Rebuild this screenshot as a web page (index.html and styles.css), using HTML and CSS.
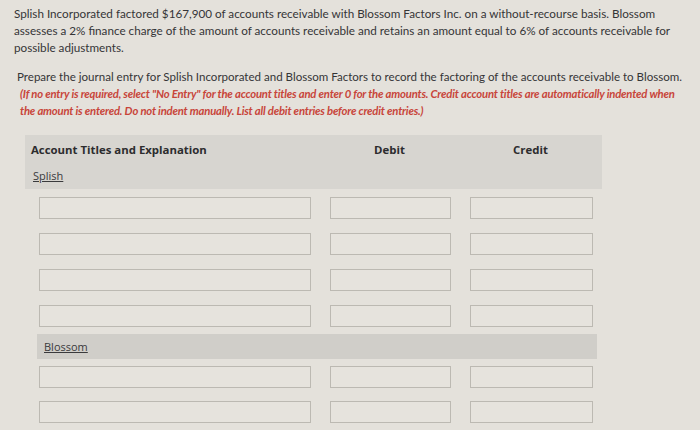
FILE: index.html
```html
<!DOCTYPE html>
<html>
<head>
<meta charset="utf-8">
<link rel="stylesheet" href="styles.css">
</head>
<body>
<div class="page">
  <p class="intro">Splish Incorporated factored $167,900 of accounts receivable with Blossom Factors Inc. on a without-recourse basis. Blossom assesses a 2% finance charge of the amount of accounts receivable and retains an amount equal to 6% of accounts receivable for possible adjustments.</p>
  <p class="task">Prepare the journal entry for Splish Incorporated and Blossom Factors to record the factoring of the accounts receivable to Blossom.
    <span class="note">(If no entry is required, select "No Entry" for the account titles and enter 0 for the amounts. Credit account titles are automatically indented when the amount is entered. Do not indent manually. List all debit entries before credit entries.)</span></p>

  <div class="sheet">
    <div class="head">
      <div class="cols">
        <div class="h-acct">Account Titles and Explanation</div>
        <div class="h-num">Debit</div>
        <div class="h-num">Credit</div>
      </div>
      <div class="party">Splish</div>
    </div>
    <div class="rows">
      <div class="cols row"><div class="box"></div><div class="box"></div><div class="box"></div></div>
      <div class="cols row"><div class="box"></div><div class="box"></div><div class="box"></div></div>
      <div class="cols row"><div class="box"></div><div class="box"></div><div class="box"></div></div>
      <div class="cols row"><div class="box"></div><div class="box"></div><div class="box"></div></div>
    </div>
    <div class="band"><span class="party">Blossom</span></div>
    <div class="rows rows-b">
      <div class="cols row"><div class="box"></div><div class="box"></div><div class="box"></div></div>
      <div class="cols row"><div class="box"></div><div class="box"></div><div class="box"></div></div>
    </div>
  </div>
</div>
</body>
</html>
```

FILE: styles.css
```css
html, body {
  margin: 0;
  padding: 0;
  background: #e4e1db;
  height: 100%;
  overflow: hidden;
}
.page {
  padding: 5px 0 0 14px;
  font-family: Lato, "Open Sans", sans-serif;
  color: #353537;
}
.intro, .task {
  margin: 0;
  font-size: 11.7px;
  line-height: 17px;
  width: 662px;
}
.task {
  margin-top: 12px;
  padding-left: 3px;
  font-size: 11.55px;
  width: 680px;
}
.note {
  display: block;
  color: #c8453a;
  font-weight: bold;
  font-style: italic;
  font-size: 11.3px;
  letter-spacing: -0.2px;
  padding-left: 3px;
  width: 656px;
}
.sheet {
  margin: 16px 0 0 11px;
  width: 577px;
  font-family: "Open Sans", sans-serif;
}
.head {
  background: #d7d5d0;
  height: 54px;
  box-sizing: border-box;
  padding: 6px 11px 0 6px;
}
.cols {
  display: grid;
  grid-template-columns: 272px 121px 123px;
  column-gap: 19px;
}
.h-acct, .h-num {
  font-weight: bold;
  font-size: 11.4px;
  line-height: 18px;
  color: #2c2c2e;
}
.h-num {
  text-align: center;
}
.head .cols {
  grid-template-columns: 279px 121px 123px;
}
.party {
  display: inline-block;
  margin-top: 10px;
  font-size: 11px;
  line-height: 14px;
  text-decoration: underline;
  color: #3a3a3c;
  margin-left: 2px;
}
.rows {
  padding: 8px 12px 0 14px;
  display: flex;
  flex-direction: column;
  gap: 14px;
}
.rows-b {
  padding-top: 7px;
  gap: 13px;
}
.box {
  height: 22px;
  box-sizing: border-box;
  border: 1px solid #bcb9b2;
  background: #e6e3dd;
}
.band {
  margin: 7px 5px 0 12px;
  height: 25px;
  background: #d0cec9;
  padding-left: 5px;
  display: flex;
  align-items: center;
}
.band .party {
  margin-top: 0;
}
```
